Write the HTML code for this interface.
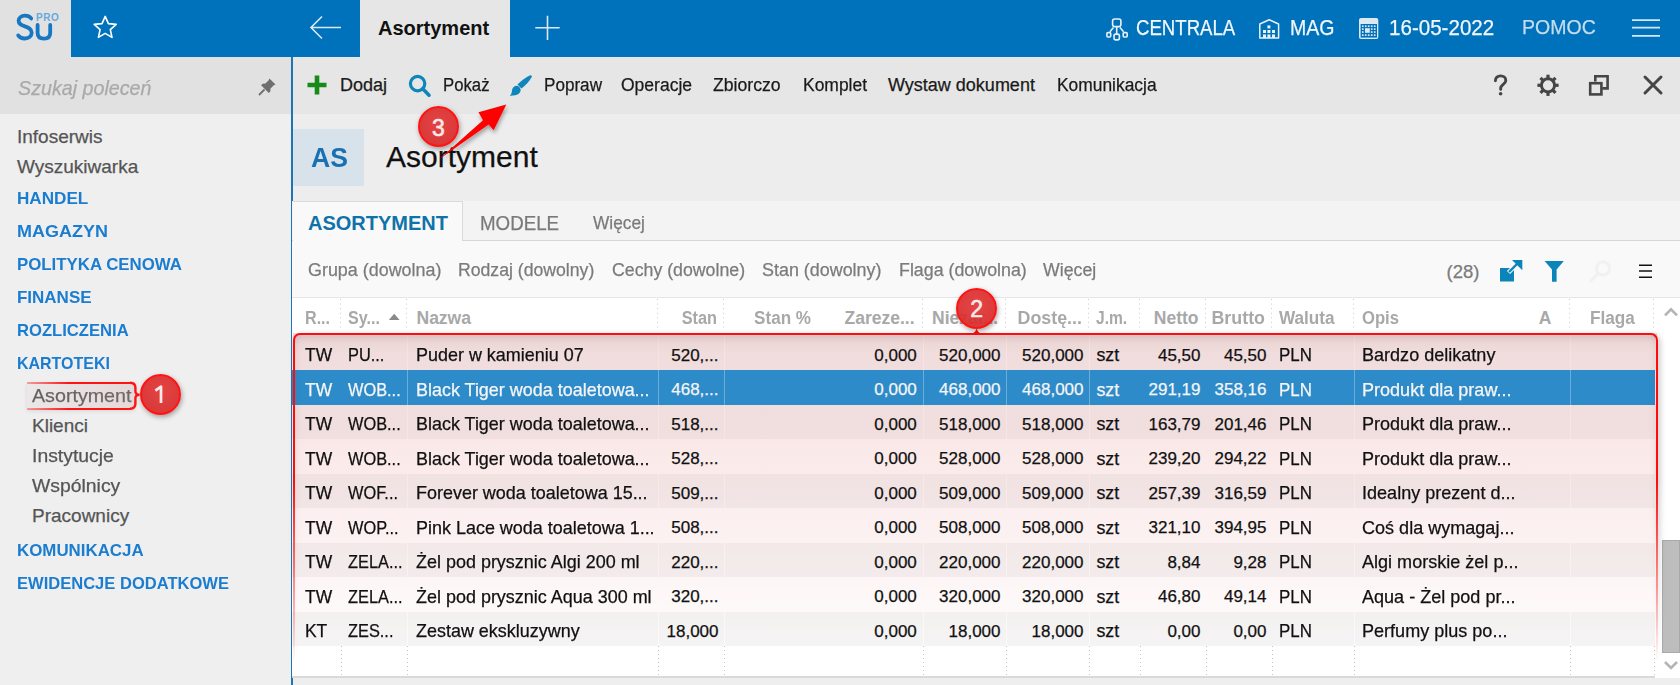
<!DOCTYPE html><html><head><meta charset="utf-8"><style>
html,body{margin:0;padding:0;width:1680px;height:685px;overflow:hidden;background:#eee}
.t{position:absolute;white-space:nowrap;line-height:normal;font-family:"Liberation Sans",sans-serif;-webkit-text-stroke:0.25px currentColor}
svg{overflow:visible}
</style></head><body>
<div style="position:absolute;left:0px;top:0px;width:1680px;height:685px;background:#eeeeee"></div>
<div style="position:absolute;left:0px;top:0px;width:71px;height:57px;background:#e1e1e1"></div>
<div style="position:absolute;left:71px;top:0px;width:1609px;height:57px;background:#0071bb"></div>
<div style="position:absolute;left:360px;top:0px;width:150px;height:57px;background:#e6e6e6"></div>
<div style="position:absolute;left:0px;top:57px;width:291px;height:57px;background:#e1e1e1"></div>
<div style="position:absolute;left:0px;top:114px;width:291px;height:571px;background:#efefef"></div>
<div style="position:absolute;left:291px;top:57px;width:2px;height:628px;background:#1f74b4"></div>
<div style="position:absolute;left:293px;top:57px;width:1387px;height:57px;background:#e6e6e6"></div>
<div style="position:absolute;left:293px;top:114px;width:1387px;height:87px;background:#ededed"></div>
<svg style="position:absolute;left:14px;top:10px;" width="50" height="34" viewBox="0 0 50 34"><text x="22" y="10.6" font-family="Liberation Sans" font-size="10" font-weight="700" fill="#66aadb" letter-spacing="0.6">PRO</text><path d="M17.2 8.4 C15.8 6.6 13.6 5.7 11 5.7 C7.2 5.7 4.6 7.8 4.6 10.8 C4.6 18 17.7 14.8 17.7 22.6 C17.7 26.2 14.8 28.5 10.8 28.5 C7.8 28.5 5.6 27.4 4.2 25.4" fill="none" stroke="#1677c3" stroke-width="3.8" stroke-linecap="round"/><path d="M23.6 15 V23 C23.6 26.6 26 28.6 30 28.6 C34 28.6 36.2 26.6 36.2 23 V15" fill="none" stroke="#1677c3" stroke-width="3.8" stroke-linecap="round"/></svg>
<svg style="position:absolute;left:90px;top:13px;" width="30" height="30" viewBox="0 0 30 30"><path d="M15.2 3.4 L18.4 10.6 L26.2 11.4 L20.3 16.6 L22 24.4 L15.2 20.4 L8.4 24.4 L10.1 16.6 L4.2 11.4 L12 10.6 Z" fill="none" stroke="#fff" stroke-width="1.6" stroke-linejoin="round"/></svg>
<svg style="position:absolute;left:306px;top:12px;" width="40" height="32" viewBox="0 0 40 32"><path d="M5 15.5 H35 M16 4.5 L5 15.5 L16 26.5" fill="none" stroke="#dce9f4" stroke-width="1.6"/></svg>
<svg style="position:absolute;left:530px;top:12px;" width="34" height="32" viewBox="0 0 34 32"><path d="M17.5 3.8 V28 M5.3 15.7 H29.7" fill="none" stroke="#dce9f4" stroke-width="1.6"/></svg>
<div class="t" style="left:378px;top:17.20px;font-size:20px;color:#111;font-weight:700;font-style:normal;-webkit-text-stroke:0;transform:scaleX(1.0);transform-origin:0 0;">Asortyment</div>
<svg style="position:absolute;left:1104px;top:16px;" width="28" height="28" viewBox="0 0 28 28"><g fill="none" stroke="#e8f1f8" stroke-width="1.6"><rect x="8.6" y="3" width="8.3" height="7.6" rx="2"/><rect x="2.9" y="16.6" width="3.8" height="4.4" rx="1"/><rect x="19.2" y="16.6" width="4" height="4.4" rx="1"/><rect x="10" y="18.1" width="5.4" height="5.8" rx="1.8"/><path d="M12.7 10.6 V18.1 M9.4 11.4 L6 15.8 M16 11.4 L19.6 15.8"/></g></svg>
<div class="t" style="left:1136px;top:15.39px;font-size:22px;color:#f2f7fb;font-weight:400;font-style:normal;transform:scaleX(0.846);transform-origin:0 0;">CENTRALA</div>
<svg style="position:absolute;left:1254px;top:14px;" width="30" height="30" viewBox="0 0 30 30"><path d="M5.8 24 V10 L15.2 5.8 L24.6 10 V24 Z" fill="none" stroke="#e8f1f8" stroke-width="1.5" stroke-linejoin="round"/><g fill="#e8f1f8"><rect x="13.4" y="11.4" width="3" height="3"/><rect x="9" y="16" width="3" height="3"/><rect x="13.4" y="16" width="3" height="3"/><rect x="18" y="16" width="3" height="3"/><rect x="9" y="20.4" width="3" height="3.6"/><rect x="13.4" y="20.4" width="3" height="3.6"/><rect x="18" y="20.4" width="3" height="3.6"/></g></svg>
<div class="t" style="left:1290px;top:15.39px;font-size:22px;color:#f2f7fb;font-weight:400;font-style:normal;transform:scaleX(0.89);transform-origin:0 0;">MAG</div>
<svg style="position:absolute;left:1354px;top:14px;" width="30" height="30" viewBox="0 0 30 30"><rect x="5" y="3.9" width="19.3" height="21.1" rx="2" fill="#dce9f3"/><rect x="6.6" y="10" width="16.4" height="13.6" fill="#0071bb"/><g fill="#dce9f3"><rect x="7.91" y="11.35" width="1.7" height="1.7"/><rect x="10.89" y="11.35" width="1.7" height="1.7"/><rect x="13.85" y="11.35" width="1.7" height="1.7"/><rect x="16.85" y="11.35" width="1.7" height="1.7"/><rect x="19.85" y="11.35" width="1.7" height="1.7"/><rect x="7.91" y="14.25" width="1.7" height="1.7"/><rect x="16.85" y="14.25" width="1.7" height="1.7"/><rect x="19.85" y="14.25" width="1.7" height="1.7"/><rect x="7.91" y="17.20" width="1.7" height="1.7"/><rect x="16.85" y="17.20" width="1.7" height="1.7"/><rect x="19.85" y="17.20" width="1.7" height="1.7"/><rect x="7.91" y="20.25" width="1.7" height="1.7"/><rect x="10.89" y="20.25" width="1.7" height="1.7"/><rect x="13.85" y="20.25" width="1.7" height="1.7"/><rect x="16.85" y="20.25" width="1.7" height="1.7"/><rect x="19.85" y="20.25" width="1.7" height="1.7"/><rect x="11" y="14.2" width="4.8" height="4.6"/></g></svg>
<div class="t" style="left:1389px;top:15.09px;font-size:22px;color:#f2f7fb;font-weight:400;font-style:normal;transform:scaleX(0.935);transform-origin:0 0;">16-05-2022</div>
<div class="t" style="left:1522px;top:14.79px;font-size:21px;color:#c5dcee;font-weight:400;font-style:normal;transform:scaleX(0.93);transform-origin:0 0;">POMOC</div>
<svg style="position:absolute;left:1630px;top:17px;" width="32" height="22" viewBox="0 0 32 22"><path d="M2 3.2 H30 M2 10.6 H30 M2 18.9 H30" stroke="#d6e6f3" stroke-width="1.7"/></svg>
<div class="t" style="left:18px;top:76.50px;font-size:20px;color:#a9a9a9;font-weight:400;font-style:italic;transform:scaleX(0.984);transform-origin:0 0;">Szukaj poleceń</div>
<svg style="position:absolute;left:256px;top:76px;" width="22" height="22" viewBox="0 0 22 22"><path d="M13.5 2.5 L19.5 8.5 L17.8 9.3 L14.5 12.6 L14.3 15.4 L12.8 16.9 L5.1 9.2 L6.6 7.7 L9.4 7.5 L12.7 4.2 Z" fill="#6f6f6f"/><path d="M8.5 13.5 L3 19" stroke="#6f6f6f" stroke-width="1.8"/></svg>
<div class="t" style="left:17px;top:125.50px;font-size:19px;color:#555555;font-weight:400;font-style:normal;">Infoserwis</div>
<div class="t" style="left:17px;top:156.21px;font-size:19px;color:#555555;font-weight:400;font-style:normal;">Wyszukiwarka</div>
<div class="t" style="left:17px;top:189.42px;font-size:17px;color:#1a7dcf;font-weight:700;font-style:normal;-webkit-text-stroke:0;transform:scaleX(1.007);transform-origin:0 0;">HANDEL</div>
<div class="t" style="left:17px;top:222.42px;font-size:17px;color:#1a7dcf;font-weight:700;font-style:normal;-webkit-text-stroke:0;transform:scaleX(1.058);transform-origin:0 0;">MAGAZYN</div>
<div class="t" style="left:17px;top:255.42px;font-size:17px;color:#1a7dcf;font-weight:700;font-style:normal;-webkit-text-stroke:0;transform:scaleX(0.99);transform-origin:0 0;">POLITYKA CENOWA</div>
<div class="t" style="left:17px;top:288.42px;font-size:17px;color:#1a7dcf;font-weight:700;font-style:normal;-webkit-text-stroke:0;transform:scaleX(0.999);transform-origin:0 0;">FINANSE</div>
<div class="t" style="left:17px;top:321.42px;font-size:17px;color:#1a7dcf;font-weight:700;font-style:normal;-webkit-text-stroke:0;transform:scaleX(0.977);transform-origin:0 0;">ROZLICZENIA</div>
<div class="t" style="left:17px;top:354.42px;font-size:17px;color:#1a7dcf;font-weight:700;font-style:normal;-webkit-text-stroke:0;transform:scaleX(0.94);transform-origin:0 0;">KARTOTEKI</div>
<div class="t" style="left:32px;top:384.50px;font-size:19px;color:#555555;font-weight:400;font-style:normal;transform:scaleX(1.035);transform-origin:0 0;">Asortyment</div>
<div class="t" style="left:32px;top:414.50px;font-size:19px;color:#555555;font-weight:400;font-style:normal;transform:scaleX(1.0);transform-origin:0 0;">Klienci</div>
<div class="t" style="left:32px;top:444.50px;font-size:19px;color:#555555;font-weight:400;font-style:normal;transform:scaleX(1.02);transform-origin:0 0;">Instytucje</div>
<div class="t" style="left:32px;top:474.50px;font-size:19px;color:#555555;font-weight:400;font-style:normal;transform:scaleX(1.02);transform-origin:0 0;">Wspólnicy</div>
<div class="t" style="left:32px;top:504.51px;font-size:19px;color:#555555;font-weight:400;font-style:normal;transform:scaleX(1.0);transform-origin:0 0;">Pracownicy</div>
<div class="t" style="left:17px;top:540.82px;font-size:17px;color:#1a7dcf;font-weight:700;font-style:normal;-webkit-text-stroke:0;transform:scaleX(0.993);transform-origin:0 0;">KOMUNIKACJA</div>
<div class="t" style="left:17px;top:573.62px;font-size:17px;color:#1a7dcf;font-weight:700;font-style:normal;-webkit-text-stroke:0;transform:scaleX(0.973);transform-origin:0 0;">EWIDENCJE DODATKOWE</div>
<svg style="position:absolute;left:306px;top:74px;" width="22" height="22" viewBox="0 0 22 22"><path d="M11 1.5 V20.5 M1.5 11 H20.5" stroke="#178a17" stroke-width="4.6"/></svg>
<div class="t" style="left:340px;top:74.91px;font-size:18px;color:#1a1a1a;font-weight:400;font-style:normal;">Dodaj</div>
<svg style="position:absolute;left:407px;top:73px;" width="26" height="25" viewBox="0 0 26 25"><circle cx="10.6" cy="10.6" r="7.2" fill="none" stroke="#0e86bb" stroke-width="3.2"/><path d="M15.8 15.8 L22 22.2" stroke="#0e86bb" stroke-width="3.6" stroke-linecap="round"/></svg>
<div class="t" style="left:443px;top:74.91px;font-size:18px;color:#1a1a1a;font-weight:400;font-style:normal;transform:scaleX(0.93);transform-origin:0 0;">Pokaż</div>
<svg style="position:absolute;left:508px;top:73px;" width="26" height="25" viewBox="0 0 26 25"><path d="M22.2 2.3 C23.4 2.0 24.2 3.0 23.6 4.2 C21.4 8.4 17.6 12.4 13.4 15.4 L9.5 11.4 C13.2 8.0 17.8 4.0 22.2 2.3 Z" fill="#0e86bb"/><path d="M7.2 13.0 C9.6 12.2 12.2 14.0 12.6 16.6 C13.0 20.2 9.4 23.0 1.8 22.8 C3.6 21.2 3.8 19.4 4.0 17.6 C4.2 15.4 5.4 13.6 7.2 13.0 Z" fill="#0e86bb"/></svg>
<div class="t" style="left:544px;top:74.91px;font-size:18px;color:#1a1a1a;font-weight:400;font-style:normal;transform:scaleX(0.95);transform-origin:0 0;">Popraw</div>
<div class="t" style="left:621px;top:74.91px;font-size:18px;color:#1a1a1a;font-weight:400;font-style:normal;transform:scaleX(0.973);transform-origin:0 0;">Operacje</div>
<div class="t" style="left:712.5px;top:74.91px;font-size:18px;color:#1a1a1a;font-weight:400;font-style:normal;transform:scaleX(0.98);transform-origin:0 0;">Zbiorczo</div>
<div class="t" style="left:803px;top:74.91px;font-size:18px;color:#1a1a1a;font-weight:400;font-style:normal;transform:scaleX(0.97);transform-origin:0 0;">Komplet</div>
<div class="t" style="left:888px;top:74.91px;font-size:18px;color:#1a1a1a;font-weight:400;font-style:normal;transform:scaleX(1.0);transform-origin:0 0;">Wystaw dokument</div>
<div class="t" style="left:1057px;top:74.91px;font-size:18px;color:#1a1a1a;font-weight:400;font-style:normal;transform:scaleX(0.966);transform-origin:0 0;">Komunikacja</div>
<svg style="position:absolute;left:1490px;top:72px;" width="22" height="26" viewBox="0 0 22 26"><path d="M5.4 8.8 C5.4 5.6 7.6 3.9 10.6 3.9 C13.7 3.9 15.8 5.8 15.8 8.5 C15.8 12 10.7 12.6 10.7 16 V17.4" fill="none" stroke="#454545" stroke-width="2.9" stroke-linecap="round"/><circle cx="10.6" cy="21.8" r="1.8" fill="#454545"/></svg>
<svg style="position:absolute;left:1536px;top:73px;" width="25" height="25" viewBox="0 0 25 25"><g transform="translate(12,12.3)" fill="#454545"><rect x="-1.6" y="-10.6" width="3.2" height="5" transform="rotate(0)"/><rect x="-1.6" y="-10.6" width="3.2" height="5" transform="rotate(45)"/><rect x="-1.6" y="-10.6" width="3.2" height="5" transform="rotate(90)"/><rect x="-1.6" y="-10.6" width="3.2" height="5" transform="rotate(135)"/><rect x="-1.6" y="-10.6" width="3.2" height="5" transform="rotate(180)"/><rect x="-1.6" y="-10.6" width="3.2" height="5" transform="rotate(225)"/><rect x="-1.6" y="-10.6" width="3.2" height="5" transform="rotate(270)"/><rect x="-1.6" y="-10.6" width="3.2" height="5" transform="rotate(315)"/></g><circle cx="12" cy="12.3" r="6.6" fill="none" stroke="#454545" stroke-width="3"/></svg>
<svg style="position:absolute;left:1587px;top:73px;" width="25" height="25" viewBox="0 0 25 25"><g fill="none" stroke="#454545" stroke-width="2.6"><path d="M8.3 8.6 V3.2 H20.6 V15.4 H15.2"/><rect x="3.2" y="10.2" width="11.2" height="11.2"/></g></svg>
<svg style="position:absolute;left:1642px;top:74px;" width="22" height="22" viewBox="0 0 22 22"><path d="M3 3 L19 19 M19 3 L3 19" stroke="#454545" stroke-width="3" stroke-linecap="round"/></svg>
<div style="position:absolute;left:293px;top:129px;width:71px;height:57px;background:#d7e2ea"></div>
<div class="t" style="left:310.5px;top:141.96px;font-size:28px;color:#1971b4;font-weight:700;font-style:normal;-webkit-text-stroke:0;transform:scaleX(0.95);transform-origin:0 0;">AS</div>
<div class="t" style="left:386px;top:139.85px;font-size:30px;color:#111;font-weight:400;font-style:normal;">Asortyment</div>
<div style="position:absolute;left:292px;top:201px;width:1388px;height:40px;background:#f3f3f3;border-bottom:1px solid #d6d6d6;box-sizing:border-box"></div>
<div style="position:absolute;left:293px;top:201px;width:170px;height:40px;background:#f9f9f9;border:1px solid #dadada;border-bottom:none;border-left:none;box-sizing:border-box"></div>
<div class="t" style="left:308px;top:211.90px;font-size:20px;color:#0f73a9;font-weight:700;font-style:normal;-webkit-text-stroke:0;">ASORTYMENT</div>
<div class="t" style="left:479.5px;top:212.35px;font-size:19.5px;color:#7a7a7a;font-weight:400;font-style:normal;transform:scaleX(0.96);transform-origin:0 0;">MODELE</div>
<div class="t" style="left:593px;top:212.46px;font-size:18.5px;color:#7a7a7a;font-weight:400;font-style:normal;transform:scaleX(0.935);transform-origin:0 0;">Więcej</div>
<div style="position:absolute;left:292px;top:241px;width:1388px;height:57px;background:#f9f9f9;border-bottom:1px solid #e6e6e6;box-sizing:border-box"></div>
<div class="t" style="left:307.5px;top:259.51px;font-size:18px;color:#7b7b7b;font-weight:400;font-style:normal;transform:scaleX(0.995);transform-origin:0 0;">Grupa (dowolna)</div>
<div class="t" style="left:458px;top:259.51px;font-size:18px;color:#7b7b7b;font-weight:400;font-style:normal;transform:scaleX(0.98);transform-origin:0 0;">Rodzaj (dowolny)</div>
<div class="t" style="left:612.4px;top:259.51px;font-size:18px;color:#7b7b7b;font-weight:400;font-style:normal;transform:scaleX(0.985);transform-origin:0 0;">Cechy (dowolne)</div>
<div class="t" style="left:762px;top:259.51px;font-size:18px;color:#7b7b7b;font-weight:400;font-style:normal;transform:scaleX(0.995);transform-origin:0 0;">Stan (dowolny)</div>
<div class="t" style="left:899px;top:259.51px;font-size:18px;color:#7b7b7b;font-weight:400;font-style:normal;transform:scaleX(0.99);transform-origin:0 0;">Flaga (dowolna)</div>
<div class="t" style="left:1043px;top:259.51px;font-size:18px;color:#7b7b7b;font-weight:400;font-style:normal;transform:scaleX(0.985);transform-origin:0 0;">Więcej</div>
<div class="t" style="left:1446.5px;top:261.26px;font-size:18.5px;color:#7b7b7b;font-weight:400;font-style:normal;">(28)</div>
<svg style="position:absolute;left:1499px;top:259px;" width="25" height="24" viewBox="0 0 25 24"><rect x="1" y="9" width="14" height="13.5" fill="#0b84b9"/><path d="M9.5 13.5 L19.5 3.5" stroke="#f9f9f9" stroke-width="4.5"/><path d="M10 13 L19 4" stroke="#0b84b9" stroke-width="2.4"/><path d="M13 1 H23.3 V11.3 Z" fill="#0b84b9"/></svg>
<svg style="position:absolute;left:1544px;top:260px;" width="22" height="23" viewBox="0 0 22 23"><path d="M0.6 1 H19.8 L12.6 9.6 V21.8 H8 V9.6 Z" fill="#0b84b9"/></svg>
<svg style="position:absolute;left:1588px;top:258px;" width="26" height="26" viewBox="0 0 26 26"><circle cx="15" cy="10.5" r="6.6" fill="none" stroke="#f1f1f1" stroke-width="3"/><path d="M10.2 15.4 L3 22.6" stroke="#f1f1f1" stroke-width="3" stroke-linecap="round"/></svg>
<svg style="position:absolute;left:1638px;top:263px;" width="16" height="16" viewBox="0 0 16 16"><path d="M1 2.2 H14 M1 8.1 H14 M1 14.2 H14" stroke="#111" stroke-width="1.5"/></svg>
<div style="position:absolute;left:292px;top:297px;width:1363px;height:381px;background:#ffffff"></div>
<div style="position:absolute;left:292px;top:297px;width:1388px;height:1px;background:#e6e6e6"></div>
<div style="position:absolute;left:1655px;top:298px;width:25px;height:380px;background:#ffffff"></div>
<div style="position:absolute;left:292px;top:676px;width:1363px;height:2px;background:#d9d9d9"></div>
<div style="position:absolute;left:340px;top:299px;width:1px;height:32px;background-image:linear-gradient(#c6c6c6 25%,transparent 25%);background-size:1px 4.6px"></div>
<div style="position:absolute;left:341px;top:646px;width:1px;height:30px;background-image:linear-gradient(#c4c4c4 25%,transparent 25%);background-size:1px 4px"></div>
<div style="position:absolute;left:406px;top:299px;width:1px;height:32px;background-image:linear-gradient(#c6c6c6 25%,transparent 25%);background-size:1px 4.6px"></div>
<div style="position:absolute;left:407px;top:646px;width:1px;height:30px;background-image:linear-gradient(#c4c4c4 25%,transparent 25%);background-size:1px 4px"></div>
<div style="position:absolute;left:657px;top:299px;width:1px;height:32px;background-image:linear-gradient(#c6c6c6 25%,transparent 25%);background-size:1px 4.6px"></div>
<div style="position:absolute;left:658px;top:646px;width:1px;height:30px;background-image:linear-gradient(#c4c4c4 25%,transparent 25%);background-size:1px 4px"></div>
<div style="position:absolute;left:723px;top:299px;width:1px;height:32px;background-image:linear-gradient(#c6c6c6 25%,transparent 25%);background-size:1px 4.6px"></div>
<div style="position:absolute;left:724px;top:646px;width:1px;height:30px;background-image:linear-gradient(#c4c4c4 25%,transparent 25%);background-size:1px 4px"></div>
<div style="position:absolute;left:922px;top:299px;width:1px;height:32px;background-image:linear-gradient(#c6c6c6 25%,transparent 25%);background-size:1px 4.6px"></div>
<div style="position:absolute;left:923px;top:646px;width:1px;height:30px;background-image:linear-gradient(#c4c4c4 25%,transparent 25%);background-size:1px 4px"></div>
<div style="position:absolute;left:1005px;top:299px;width:1px;height:32px;background-image:linear-gradient(#c6c6c6 25%,transparent 25%);background-size:1px 4.6px"></div>
<div style="position:absolute;left:1006px;top:646px;width:1px;height:30px;background-image:linear-gradient(#c4c4c4 25%,transparent 25%);background-size:1px 4px"></div>
<div style="position:absolute;left:1088px;top:299px;width:1px;height:32px;background-image:linear-gradient(#c6c6c6 25%,transparent 25%);background-size:1px 4.6px"></div>
<div style="position:absolute;left:1089px;top:646px;width:1px;height:30px;background-image:linear-gradient(#c4c4c4 25%,transparent 25%);background-size:1px 4px"></div>
<div style="position:absolute;left:1139px;top:299px;width:1px;height:32px;background-image:linear-gradient(#c6c6c6 25%,transparent 25%);background-size:1px 4.6px"></div>
<div style="position:absolute;left:1140px;top:646px;width:1px;height:30px;background-image:linear-gradient(#c4c4c4 25%,transparent 25%);background-size:1px 4px"></div>
<div style="position:absolute;left:1205px;top:299px;width:1px;height:32px;background-image:linear-gradient(#c6c6c6 25%,transparent 25%);background-size:1px 4.6px"></div>
<div style="position:absolute;left:1206px;top:646px;width:1px;height:30px;background-image:linear-gradient(#c4c4c4 25%,transparent 25%);background-size:1px 4px"></div>
<div style="position:absolute;left:1271px;top:299px;width:1px;height:32px;background-image:linear-gradient(#c6c6c6 25%,transparent 25%);background-size:1px 4.6px"></div>
<div style="position:absolute;left:1272px;top:646px;width:1px;height:30px;background-image:linear-gradient(#c4c4c4 25%,transparent 25%);background-size:1px 4px"></div>
<div style="position:absolute;left:1353px;top:299px;width:1px;height:32px;background-image:linear-gradient(#c6c6c6 25%,transparent 25%);background-size:1px 4.6px"></div>
<div style="position:absolute;left:1354px;top:646px;width:1px;height:30px;background-image:linear-gradient(#c4c4c4 25%,transparent 25%);background-size:1px 4px"></div>
<div style="position:absolute;left:1569px;top:299px;width:1px;height:32px;background-image:linear-gradient(#c6c6c6 25%,transparent 25%);background-size:1px 4.6px"></div>
<div style="position:absolute;left:1570px;top:646px;width:1px;height:30px;background-image:linear-gradient(#c4c4c4 25%,transparent 25%);background-size:1px 4px"></div>
<div style="position:absolute;left:1653px;top:299px;width:1px;height:32px;background-image:linear-gradient(#c6c6c6 25%,transparent 25%);background-size:1px 4.6px"></div>
<div style="position:absolute;left:1654px;top:646px;width:1px;height:30px;background-image:linear-gradient(#c4c4c4 25%,transparent 25%);background-size:1px 4px"></div>
<div class="t" style="left:305.4px;top:307.76px;font-size:17.5px;color:#a8a8a8;font-weight:700;font-style:normal;-webkit-text-stroke:0;transform:scaleX(0.92);transform-origin:0 0;">R...</div>
<div class="t" style="left:348.4px;top:307.76px;font-size:17.5px;color:#a8a8a8;font-weight:700;font-style:normal;-webkit-text-stroke:0;transform:scaleX(0.92);transform-origin:0 0;">Sy...</div>
<svg style="position:absolute;left:388px;top:313px;" width="13" height="8" viewBox="0 0 13 8"><path d="M0.8 7 L6.2 0.8 L11.6 7 Z" fill="#8a8a8a"/></svg>
<div class="t" style="left:416.5px;top:307.76px;font-size:17.5px;color:#a8a8a8;font-weight:700;font-style:normal;-webkit-text-stroke:0;transform:scaleX(1.0);transform-origin:0 0;">Nazwa</div>
<div class="t" style="left:316.5px;width:400px;text-align:right;top:307.76px;font-size:17.5px;color:#a8a8a8;font-weight:700;-webkit-text-stroke:0;transform:scaleX(0.93);transform-origin:100% 0;">Stan</div>
<div class="t" style="left:410.5px;width:400px;text-align:right;top:307.76px;font-size:17.5px;color:#a8a8a8;font-weight:700;-webkit-text-stroke:0;transform:scaleX(0.975);transform-origin:100% 0;">Stan %</div>
<div class="t" style="left:514.5px;width:400px;text-align:right;top:307.76px;font-size:17.5px;color:#a8a8a8;font-weight:700;-webkit-text-stroke:0;transform:scaleX(1.0);transform-origin:100% 0;">Zareze...</div>
<div class="t" style="left:932px;top:307.76px;font-size:17.5px;color:#a8a8a8;font-weight:700;font-style:normal;-webkit-text-stroke:0;transform:scaleX(1.0);transform-origin:0 0;">Niezar...</div>
<div class="t" style="left:681.5px;width:400px;text-align:right;top:307.76px;font-size:17.5px;color:#a8a8a8;font-weight:700;-webkit-text-stroke:0;transform:scaleX(1.02);transform-origin:100% 0;">Dostę...</div>
<div class="t" style="left:1096.4px;top:307.76px;font-size:17.5px;color:#a8a8a8;font-weight:700;font-style:normal;-webkit-text-stroke:0;transform:scaleX(0.89);transform-origin:0 0;">J.m.</div>
<div class="t" style="left:798.5px;width:400px;text-align:right;top:307.76px;font-size:17.5px;color:#a8a8a8;font-weight:700;-webkit-text-stroke:0;transform:scaleX(1.0);transform-origin:100% 0;">Netto</div>
<div class="t" style="left:865px;width:400px;text-align:right;top:307.76px;font-size:17.5px;color:#a8a8a8;font-weight:700;-webkit-text-stroke:0;transform:scaleX(1.02);transform-origin:100% 0;">Brutto</div>
<div class="t" style="left:1278.6px;top:307.76px;font-size:17.5px;color:#a8a8a8;font-weight:700;font-style:normal;-webkit-text-stroke:0;transform:scaleX(0.98);transform-origin:0 0;">Waluta</div>
<div class="t" style="left:1362px;top:307.76px;font-size:17.5px;color:#a8a8a8;font-weight:700;font-style:normal;-webkit-text-stroke:0;transform:scaleX(0.95);transform-origin:0 0;">Opis</div>
<div class="t" style="left:1151.5px;width:400px;text-align:right;top:307.76px;font-size:17.5px;color:#a8a8a8;font-weight:700;-webkit-text-stroke:0;">A</div>
<div class="t" style="left:1590.3px;top:307.76px;font-size:17.5px;color:#a8a8a8;font-weight:700;font-style:normal;-webkit-text-stroke:0;transform:scaleX(0.98);transform-origin:0 0;">Flaga</div>
<svg style="position:absolute;left:1663px;top:306px;" width="16" height="12" viewBox="0 0 16 12"><path d="M2 9.4 L8 3.4 L14 9.4" fill="none" stroke="#b4b4b4" stroke-width="2.6"/></svg>
<div style="position:absolute;left:1662px;top:540px;width:18px;height:113px;background:#bdbdbd;border:1px solid #a9a9a9;box-sizing:border-box"></div>
<svg style="position:absolute;left:1663px;top:659px;" width="16" height="12" viewBox="0 0 16 12"><path d="M2 3 L8 9 L14 3" fill="none" stroke="#b4b4b4" stroke-width="2.6"/></svg>
<div style="position:absolute;left:292px;top:336px;width:1363px;height:34px;background:#f5f5f5"></div>
<div style="position:absolute;left:407px;top:336px;width:1px;height:34px;background:rgba(255,255,255,0.7)"></div>
<div style="position:absolute;left:658px;top:336px;width:1px;height:34px;background:rgba(255,255,255,0.7)"></div>
<div style="position:absolute;left:724px;top:336px;width:1px;height:34px;background:rgba(255,255,255,0.7)"></div>
<div style="position:absolute;left:923px;top:336px;width:1px;height:34px;background:rgba(255,255,255,0.7)"></div>
<div style="position:absolute;left:1006px;top:336px;width:1px;height:34px;background:rgba(255,255,255,0.7)"></div>
<div style="position:absolute;left:1089px;top:336px;width:1px;height:34px;background:rgba(255,255,255,0.7)"></div>
<div style="position:absolute;left:1354px;top:336px;width:1px;height:34px;background:rgba(255,255,255,0.7)"></div>
<div style="position:absolute;left:1570px;top:336px;width:1px;height:34px;background:rgba(255,255,255,0.7)"></div>
<div style="position:absolute;left:292px;top:405px;width:1363px;height:34px;background:#f5f5f5"></div>
<div style="position:absolute;left:407px;top:405px;width:1px;height:34px;background:rgba(255,255,255,0.7)"></div>
<div style="position:absolute;left:658px;top:405px;width:1px;height:34px;background:rgba(255,255,255,0.7)"></div>
<div style="position:absolute;left:724px;top:405px;width:1px;height:34px;background:rgba(255,255,255,0.7)"></div>
<div style="position:absolute;left:923px;top:405px;width:1px;height:34px;background:rgba(255,255,255,0.7)"></div>
<div style="position:absolute;left:1006px;top:405px;width:1px;height:34px;background:rgba(255,255,255,0.7)"></div>
<div style="position:absolute;left:1089px;top:405px;width:1px;height:34px;background:rgba(255,255,255,0.7)"></div>
<div style="position:absolute;left:1354px;top:405px;width:1px;height:34px;background:rgba(255,255,255,0.7)"></div>
<div style="position:absolute;left:1570px;top:405px;width:1px;height:34px;background:rgba(255,255,255,0.7)"></div>
<div style="position:absolute;left:292px;top:439px;width:1363px;height:35px;background:#ffffff"></div>
<div style="position:absolute;left:407px;top:439px;width:1px;height:35px;background:rgba(255,255,255,0.7)"></div>
<div style="position:absolute;left:658px;top:439px;width:1px;height:35px;background:rgba(255,255,255,0.7)"></div>
<div style="position:absolute;left:724px;top:439px;width:1px;height:35px;background:rgba(255,255,255,0.7)"></div>
<div style="position:absolute;left:923px;top:439px;width:1px;height:35px;background:rgba(255,255,255,0.7)"></div>
<div style="position:absolute;left:1006px;top:439px;width:1px;height:35px;background:rgba(255,255,255,0.7)"></div>
<div style="position:absolute;left:1089px;top:439px;width:1px;height:35px;background:rgba(255,255,255,0.7)"></div>
<div style="position:absolute;left:1354px;top:439px;width:1px;height:35px;background:rgba(255,255,255,0.7)"></div>
<div style="position:absolute;left:1570px;top:439px;width:1px;height:35px;background:rgba(255,255,255,0.7)"></div>
<div style="position:absolute;left:292px;top:474px;width:1363px;height:34px;background:#f5f5f5"></div>
<div style="position:absolute;left:407px;top:474px;width:1px;height:34px;background:rgba(255,255,255,0.7)"></div>
<div style="position:absolute;left:658px;top:474px;width:1px;height:34px;background:rgba(255,255,255,0.7)"></div>
<div style="position:absolute;left:724px;top:474px;width:1px;height:34px;background:rgba(255,255,255,0.7)"></div>
<div style="position:absolute;left:923px;top:474px;width:1px;height:34px;background:rgba(255,255,255,0.7)"></div>
<div style="position:absolute;left:1006px;top:474px;width:1px;height:34px;background:rgba(255,255,255,0.7)"></div>
<div style="position:absolute;left:1089px;top:474px;width:1px;height:34px;background:rgba(255,255,255,0.7)"></div>
<div style="position:absolute;left:1354px;top:474px;width:1px;height:34px;background:rgba(255,255,255,0.7)"></div>
<div style="position:absolute;left:1570px;top:474px;width:1px;height:34px;background:rgba(255,255,255,0.7)"></div>
<div style="position:absolute;left:292px;top:508px;width:1363px;height:35px;background:#ffffff"></div>
<div style="position:absolute;left:407px;top:508px;width:1px;height:35px;background:rgba(255,255,255,0.7)"></div>
<div style="position:absolute;left:658px;top:508px;width:1px;height:35px;background:rgba(255,255,255,0.7)"></div>
<div style="position:absolute;left:724px;top:508px;width:1px;height:35px;background:rgba(255,255,255,0.7)"></div>
<div style="position:absolute;left:923px;top:508px;width:1px;height:35px;background:rgba(255,255,255,0.7)"></div>
<div style="position:absolute;left:1006px;top:508px;width:1px;height:35px;background:rgba(255,255,255,0.7)"></div>
<div style="position:absolute;left:1089px;top:508px;width:1px;height:35px;background:rgba(255,255,255,0.7)"></div>
<div style="position:absolute;left:1354px;top:508px;width:1px;height:35px;background:rgba(255,255,255,0.7)"></div>
<div style="position:absolute;left:1570px;top:508px;width:1px;height:35px;background:rgba(255,255,255,0.7)"></div>
<div style="position:absolute;left:292px;top:543px;width:1363px;height:34px;background:#f5f5f5"></div>
<div style="position:absolute;left:407px;top:543px;width:1px;height:34px;background:rgba(255,255,255,0.7)"></div>
<div style="position:absolute;left:658px;top:543px;width:1px;height:34px;background:rgba(255,255,255,0.7)"></div>
<div style="position:absolute;left:724px;top:543px;width:1px;height:34px;background:rgba(255,255,255,0.7)"></div>
<div style="position:absolute;left:923px;top:543px;width:1px;height:34px;background:rgba(255,255,255,0.7)"></div>
<div style="position:absolute;left:1006px;top:543px;width:1px;height:34px;background:rgba(255,255,255,0.7)"></div>
<div style="position:absolute;left:1089px;top:543px;width:1px;height:34px;background:rgba(255,255,255,0.7)"></div>
<div style="position:absolute;left:1354px;top:543px;width:1px;height:34px;background:rgba(255,255,255,0.7)"></div>
<div style="position:absolute;left:1570px;top:543px;width:1px;height:34px;background:rgba(255,255,255,0.7)"></div>
<div style="position:absolute;left:292px;top:577px;width:1363px;height:35px;background:#ffffff"></div>
<div style="position:absolute;left:407px;top:577px;width:1px;height:35px;background:rgba(255,255,255,0.7)"></div>
<div style="position:absolute;left:658px;top:577px;width:1px;height:35px;background:rgba(255,255,255,0.7)"></div>
<div style="position:absolute;left:724px;top:577px;width:1px;height:35px;background:rgba(255,255,255,0.7)"></div>
<div style="position:absolute;left:923px;top:577px;width:1px;height:35px;background:rgba(255,255,255,0.7)"></div>
<div style="position:absolute;left:1006px;top:577px;width:1px;height:35px;background:rgba(255,255,255,0.7)"></div>
<div style="position:absolute;left:1089px;top:577px;width:1px;height:35px;background:rgba(255,255,255,0.7)"></div>
<div style="position:absolute;left:1354px;top:577px;width:1px;height:35px;background:rgba(255,255,255,0.7)"></div>
<div style="position:absolute;left:1570px;top:577px;width:1px;height:35px;background:rgba(255,255,255,0.7)"></div>
<div style="position:absolute;left:292px;top:612px;width:1363px;height:34px;background:#f5f5f5"></div>
<div style="position:absolute;left:407px;top:612px;width:1px;height:34px;background:rgba(255,255,255,0.7)"></div>
<div style="position:absolute;left:658px;top:612px;width:1px;height:34px;background:rgba(255,255,255,0.7)"></div>
<div style="position:absolute;left:724px;top:612px;width:1px;height:34px;background:rgba(255,255,255,0.7)"></div>
<div style="position:absolute;left:923px;top:612px;width:1px;height:34px;background:rgba(255,255,255,0.7)"></div>
<div style="position:absolute;left:1006px;top:612px;width:1px;height:34px;background:rgba(255,255,255,0.7)"></div>
<div style="position:absolute;left:1089px;top:612px;width:1px;height:34px;background:rgba(255,255,255,0.7)"></div>
<div style="position:absolute;left:1354px;top:612px;width:1px;height:34px;background:rgba(255,255,255,0.7)"></div>
<div style="position:absolute;left:1570px;top:612px;width:1px;height:34px;background:rgba(255,255,255,0.7)"></div>
<div style="position:absolute;left:293px;top:333px;width:1364px;height:320px;background:linear-gradient(rgba(200,0,0,0.10),rgba(200,0,0,0.095) 30%,rgba(200,0,0,0.06) 60%,rgba(200,0,0,0.033) 82%,rgba(200,0,0,0.0) 100%)"></div>
<div style="position:absolute;left:293px;top:333px;width:1364px;height:20px;background:linear-gradient(rgba(120,40,40,0.06),rgba(120,40,40,0))"></div>
<div style="position:absolute;left:292px;top:370px;width:1363px;height:35px;background:#2e8bc9"></div>
<div style="position:absolute;left:407px;top:370px;width:1px;height:35px;background:rgba(255,255,255,0.3)"></div>
<div style="position:absolute;left:658px;top:370px;width:1px;height:35px;background:rgba(255,255,255,0.3)"></div>
<div style="position:absolute;left:724px;top:370px;width:1px;height:35px;background:rgba(255,255,255,0.3)"></div>
<div style="position:absolute;left:923px;top:370px;width:1px;height:35px;background:rgba(255,255,255,0.3)"></div>
<div style="position:absolute;left:1006px;top:370px;width:1px;height:35px;background:rgba(255,255,255,0.3)"></div>
<div style="position:absolute;left:1089px;top:370px;width:1px;height:35px;background:rgba(255,255,255,0.3)"></div>
<div style="position:absolute;left:1354px;top:370px;width:1px;height:35px;background:rgba(255,255,255,0.3)"></div>
<div style="position:absolute;left:1570px;top:370px;width:1px;height:35px;background:rgba(255,255,255,0.3)"></div>
<div class="t" style="left:305.4px;top:345.19px;font-size:17.8px;color:#111;font-weight:400;font-style:normal;transform:scaleX(0.98);transform-origin:0 0;">TW</div>
<div class="t" style="left:348.4px;top:345.19px;font-size:17.8px;color:#111;font-weight:400;font-style:normal;transform:scaleX(0.92);transform-origin:0 0;">PU...</div>
<div class="t" style="left:416.2px;top:345.19px;font-size:17.8px;color:#111;font-weight:400;font-style:normal;transform:scaleX(1.01);transform-origin:0 0;">Puder w kamieniu 07</div>
<div class="t" style="left:318.5px;width:400px;text-align:right;top:345.92px;font-size:17px;color:#111;font-weight:400;">520,...</div>
<div class="t" style="left:516.8px;width:400px;text-align:right;top:345.92px;font-size:17px;color:#111;font-weight:400;">0,000</div>
<div class="t" style="left:600.5px;width:400px;text-align:right;top:345.92px;font-size:17px;color:#111;font-weight:400;">520,000</div>
<div class="t" style="left:683.5px;width:400px;text-align:right;top:345.92px;font-size:17px;color:#111;font-weight:400;">520,000</div>
<div class="t" style="left:1096.4px;top:345.19px;font-size:17.8px;color:#111;font-weight:400;font-style:normal;">szt</div>
<div class="t" style="left:800.5px;width:400px;text-align:right;top:345.92px;font-size:17px;color:#111;font-weight:400;">45,50</div>
<div class="t" style="left:866.5px;width:400px;text-align:right;top:345.92px;font-size:17px;color:#111;font-weight:400;">45,50</div>
<div class="t" style="left:1278.6px;top:345.19px;font-size:17.8px;color:#111;font-weight:400;font-style:normal;transform:scaleX(0.95);transform-origin:0 0;">PLN</div>
<div class="t" style="left:1362px;top:345.19px;font-size:17.8px;color:#111;font-weight:400;font-style:normal;transform:scaleX(1.015);transform-origin:0 0;">Bardzo delikatny</div>
<div class="t" style="left:305.4px;top:379.69px;font-size:17.8px;color:#f5f5f5;font-weight:400;font-style:normal;transform:scaleX(0.98);transform-origin:0 0;">TW</div>
<div class="t" style="left:348.4px;top:379.69px;font-size:17.8px;color:#f5f5f5;font-weight:400;font-style:normal;transform:scaleX(0.92);transform-origin:0 0;">WOB...</div>
<div class="t" style="left:416.2px;top:379.69px;font-size:17.8px;color:#f5f5f5;font-weight:400;font-style:normal;transform:scaleX(1.01);transform-origin:0 0;">Black Tiger woda toaletowa...</div>
<div class="t" style="left:318.5px;width:400px;text-align:right;top:380.42px;font-size:17px;color:#f5f5f5;font-weight:400;">468,...</div>
<div class="t" style="left:516.8px;width:400px;text-align:right;top:380.42px;font-size:17px;color:#f5f5f5;font-weight:400;">0,000</div>
<div class="t" style="left:600.5px;width:400px;text-align:right;top:380.42px;font-size:17px;color:#f5f5f5;font-weight:400;">468,000</div>
<div class="t" style="left:683.5px;width:400px;text-align:right;top:380.42px;font-size:17px;color:#f5f5f5;font-weight:400;">468,000</div>
<div class="t" style="left:1096.4px;top:379.69px;font-size:17.8px;color:#f5f5f5;font-weight:400;font-style:normal;">szt</div>
<div class="t" style="left:800.5px;width:400px;text-align:right;top:380.42px;font-size:17px;color:#f5f5f5;font-weight:400;">291,19</div>
<div class="t" style="left:866.5px;width:400px;text-align:right;top:380.42px;font-size:17px;color:#f5f5f5;font-weight:400;">358,16</div>
<div class="t" style="left:1278.6px;top:379.69px;font-size:17.8px;color:#f5f5f5;font-weight:400;font-style:normal;transform:scaleX(0.95);transform-origin:0 0;">PLN</div>
<div class="t" style="left:1362px;top:379.69px;font-size:17.8px;color:#f5f5f5;font-weight:400;font-style:normal;transform:scaleX(1.015);transform-origin:0 0;">Produkt dla praw...</div>
<div class="t" style="left:305.4px;top:414.19px;font-size:17.8px;color:#111;font-weight:400;font-style:normal;transform:scaleX(0.98);transform-origin:0 0;">TW</div>
<div class="t" style="left:348.4px;top:414.19px;font-size:17.8px;color:#111;font-weight:400;font-style:normal;transform:scaleX(0.92);transform-origin:0 0;">WOB...</div>
<div class="t" style="left:416.2px;top:414.19px;font-size:17.8px;color:#111;font-weight:400;font-style:normal;transform:scaleX(1.01);transform-origin:0 0;">Black Tiger woda toaletowa...</div>
<div class="t" style="left:318.5px;width:400px;text-align:right;top:414.92px;font-size:17px;color:#111;font-weight:400;">518,...</div>
<div class="t" style="left:516.8px;width:400px;text-align:right;top:414.92px;font-size:17px;color:#111;font-weight:400;">0,000</div>
<div class="t" style="left:600.5px;width:400px;text-align:right;top:414.92px;font-size:17px;color:#111;font-weight:400;">518,000</div>
<div class="t" style="left:683.5px;width:400px;text-align:right;top:414.92px;font-size:17px;color:#111;font-weight:400;">518,000</div>
<div class="t" style="left:1096.4px;top:414.19px;font-size:17.8px;color:#111;font-weight:400;font-style:normal;">szt</div>
<div class="t" style="left:800.5px;width:400px;text-align:right;top:414.92px;font-size:17px;color:#111;font-weight:400;">163,79</div>
<div class="t" style="left:866.5px;width:400px;text-align:right;top:414.92px;font-size:17px;color:#111;font-weight:400;">201,46</div>
<div class="t" style="left:1278.6px;top:414.19px;font-size:17.8px;color:#111;font-weight:400;font-style:normal;transform:scaleX(0.95);transform-origin:0 0;">PLN</div>
<div class="t" style="left:1362px;top:414.19px;font-size:17.8px;color:#111;font-weight:400;font-style:normal;transform:scaleX(1.015);transform-origin:0 0;">Produkt dla praw...</div>
<div class="t" style="left:305.4px;top:448.69px;font-size:17.8px;color:#111;font-weight:400;font-style:normal;transform:scaleX(0.98);transform-origin:0 0;">TW</div>
<div class="t" style="left:348.4px;top:448.69px;font-size:17.8px;color:#111;font-weight:400;font-style:normal;transform:scaleX(0.92);transform-origin:0 0;">WOB...</div>
<div class="t" style="left:416.2px;top:448.69px;font-size:17.8px;color:#111;font-weight:400;font-style:normal;transform:scaleX(1.01);transform-origin:0 0;">Black Tiger woda toaletowa...</div>
<div class="t" style="left:318.5px;width:400px;text-align:right;top:449.42px;font-size:17px;color:#111;font-weight:400;">528,...</div>
<div class="t" style="left:516.8px;width:400px;text-align:right;top:449.42px;font-size:17px;color:#111;font-weight:400;">0,000</div>
<div class="t" style="left:600.5px;width:400px;text-align:right;top:449.42px;font-size:17px;color:#111;font-weight:400;">528,000</div>
<div class="t" style="left:683.5px;width:400px;text-align:right;top:449.42px;font-size:17px;color:#111;font-weight:400;">528,000</div>
<div class="t" style="left:1096.4px;top:448.69px;font-size:17.8px;color:#111;font-weight:400;font-style:normal;">szt</div>
<div class="t" style="left:800.5px;width:400px;text-align:right;top:449.42px;font-size:17px;color:#111;font-weight:400;">239,20</div>
<div class="t" style="left:866.5px;width:400px;text-align:right;top:449.42px;font-size:17px;color:#111;font-weight:400;">294,22</div>
<div class="t" style="left:1278.6px;top:448.69px;font-size:17.8px;color:#111;font-weight:400;font-style:normal;transform:scaleX(0.95);transform-origin:0 0;">PLN</div>
<div class="t" style="left:1362px;top:448.69px;font-size:17.8px;color:#111;font-weight:400;font-style:normal;transform:scaleX(1.015);transform-origin:0 0;">Produkt dla praw...</div>
<div class="t" style="left:305.4px;top:483.19px;font-size:17.8px;color:#111;font-weight:400;font-style:normal;transform:scaleX(0.98);transform-origin:0 0;">TW</div>
<div class="t" style="left:348.4px;top:483.19px;font-size:17.8px;color:#111;font-weight:400;font-style:normal;transform:scaleX(0.92);transform-origin:0 0;">WOF...</div>
<div class="t" style="left:416.2px;top:483.19px;font-size:17.8px;color:#111;font-weight:400;font-style:normal;transform:scaleX(1.01);transform-origin:0 0;">Forever woda toaletowa 15...</div>
<div class="t" style="left:318.5px;width:400px;text-align:right;top:483.92px;font-size:17px;color:#111;font-weight:400;">509,...</div>
<div class="t" style="left:516.8px;width:400px;text-align:right;top:483.92px;font-size:17px;color:#111;font-weight:400;">0,000</div>
<div class="t" style="left:600.5px;width:400px;text-align:right;top:483.92px;font-size:17px;color:#111;font-weight:400;">509,000</div>
<div class="t" style="left:683.5px;width:400px;text-align:right;top:483.92px;font-size:17px;color:#111;font-weight:400;">509,000</div>
<div class="t" style="left:1096.4px;top:483.19px;font-size:17.8px;color:#111;font-weight:400;font-style:normal;">szt</div>
<div class="t" style="left:800.5px;width:400px;text-align:right;top:483.92px;font-size:17px;color:#111;font-weight:400;">257,39</div>
<div class="t" style="left:866.5px;width:400px;text-align:right;top:483.92px;font-size:17px;color:#111;font-weight:400;">316,59</div>
<div class="t" style="left:1278.6px;top:483.19px;font-size:17.8px;color:#111;font-weight:400;font-style:normal;transform:scaleX(0.95);transform-origin:0 0;">PLN</div>
<div class="t" style="left:1362px;top:483.19px;font-size:17.8px;color:#111;font-weight:400;font-style:normal;transform:scaleX(1.015);transform-origin:0 0;">Idealny prezent d...</div>
<div class="t" style="left:305.4px;top:517.69px;font-size:17.8px;color:#111;font-weight:400;font-style:normal;transform:scaleX(0.98);transform-origin:0 0;">TW</div>
<div class="t" style="left:348.4px;top:517.69px;font-size:17.8px;color:#111;font-weight:400;font-style:normal;transform:scaleX(0.92);transform-origin:0 0;">WOP...</div>
<div class="t" style="left:416.2px;top:517.69px;font-size:17.8px;color:#111;font-weight:400;font-style:normal;transform:scaleX(1.01);transform-origin:0 0;">Pink Lace woda toaletowa 1...</div>
<div class="t" style="left:318.5px;width:400px;text-align:right;top:518.41px;font-size:17px;color:#111;font-weight:400;">508,...</div>
<div class="t" style="left:516.8px;width:400px;text-align:right;top:518.41px;font-size:17px;color:#111;font-weight:400;">0,000</div>
<div class="t" style="left:600.5px;width:400px;text-align:right;top:518.41px;font-size:17px;color:#111;font-weight:400;">508,000</div>
<div class="t" style="left:683.5px;width:400px;text-align:right;top:518.41px;font-size:17px;color:#111;font-weight:400;">508,000</div>
<div class="t" style="left:1096.4px;top:517.69px;font-size:17.8px;color:#111;font-weight:400;font-style:normal;">szt</div>
<div class="t" style="left:800.5px;width:400px;text-align:right;top:518.41px;font-size:17px;color:#111;font-weight:400;">321,10</div>
<div class="t" style="left:866.5px;width:400px;text-align:right;top:518.41px;font-size:17px;color:#111;font-weight:400;">394,95</div>
<div class="t" style="left:1278.6px;top:517.69px;font-size:17.8px;color:#111;font-weight:400;font-style:normal;transform:scaleX(0.95);transform-origin:0 0;">PLN</div>
<div class="t" style="left:1362px;top:517.69px;font-size:17.8px;color:#111;font-weight:400;font-style:normal;transform:scaleX(1.015);transform-origin:0 0;">Coś dla wymagaj...</div>
<div class="t" style="left:305.4px;top:552.19px;font-size:17.8px;color:#111;font-weight:400;font-style:normal;transform:scaleX(0.98);transform-origin:0 0;">TW</div>
<div class="t" style="left:348.4px;top:552.19px;font-size:17.8px;color:#111;font-weight:400;font-style:normal;transform:scaleX(0.92);transform-origin:0 0;">ZELA...</div>
<div class="t" style="left:416.2px;top:552.19px;font-size:17.8px;color:#111;font-weight:400;font-style:normal;transform:scaleX(1.01);transform-origin:0 0;">Żel pod prysznic Algi 200 ml</div>
<div class="t" style="left:318.5px;width:400px;text-align:right;top:552.91px;font-size:17px;color:#111;font-weight:400;">220,...</div>
<div class="t" style="left:516.8px;width:400px;text-align:right;top:552.91px;font-size:17px;color:#111;font-weight:400;">0,000</div>
<div class="t" style="left:600.5px;width:400px;text-align:right;top:552.91px;font-size:17px;color:#111;font-weight:400;">220,000</div>
<div class="t" style="left:683.5px;width:400px;text-align:right;top:552.91px;font-size:17px;color:#111;font-weight:400;">220,000</div>
<div class="t" style="left:1096.4px;top:552.19px;font-size:17.8px;color:#111;font-weight:400;font-style:normal;">szt</div>
<div class="t" style="left:800.5px;width:400px;text-align:right;top:552.91px;font-size:17px;color:#111;font-weight:400;">8,84</div>
<div class="t" style="left:866.5px;width:400px;text-align:right;top:552.91px;font-size:17px;color:#111;font-weight:400;">9,28</div>
<div class="t" style="left:1278.6px;top:552.19px;font-size:17.8px;color:#111;font-weight:400;font-style:normal;transform:scaleX(0.95);transform-origin:0 0;">PLN</div>
<div class="t" style="left:1362px;top:552.19px;font-size:17.8px;color:#111;font-weight:400;font-style:normal;transform:scaleX(1.015);transform-origin:0 0;">Algi morskie żel p...</div>
<div class="t" style="left:305.4px;top:586.69px;font-size:17.8px;color:#111;font-weight:400;font-style:normal;transform:scaleX(0.98);transform-origin:0 0;">TW</div>
<div class="t" style="left:348.4px;top:586.69px;font-size:17.8px;color:#111;font-weight:400;font-style:normal;transform:scaleX(0.92);transform-origin:0 0;">ZELA...</div>
<div class="t" style="left:416.2px;top:586.69px;font-size:17.8px;color:#111;font-weight:400;font-style:normal;transform:scaleX(1.01);transform-origin:0 0;">Żel pod prysznic Aqua 300 ml</div>
<div class="t" style="left:318.5px;width:400px;text-align:right;top:587.41px;font-size:17px;color:#111;font-weight:400;">320,...</div>
<div class="t" style="left:516.8px;width:400px;text-align:right;top:587.41px;font-size:17px;color:#111;font-weight:400;">0,000</div>
<div class="t" style="left:600.5px;width:400px;text-align:right;top:587.41px;font-size:17px;color:#111;font-weight:400;">320,000</div>
<div class="t" style="left:683.5px;width:400px;text-align:right;top:587.41px;font-size:17px;color:#111;font-weight:400;">320,000</div>
<div class="t" style="left:1096.4px;top:586.69px;font-size:17.8px;color:#111;font-weight:400;font-style:normal;">szt</div>
<div class="t" style="left:800.5px;width:400px;text-align:right;top:587.41px;font-size:17px;color:#111;font-weight:400;">46,80</div>
<div class="t" style="left:866.5px;width:400px;text-align:right;top:587.41px;font-size:17px;color:#111;font-weight:400;">49,14</div>
<div class="t" style="left:1278.6px;top:586.69px;font-size:17.8px;color:#111;font-weight:400;font-style:normal;transform:scaleX(0.95);transform-origin:0 0;">PLN</div>
<div class="t" style="left:1362px;top:586.69px;font-size:17.8px;color:#111;font-weight:400;font-style:normal;transform:scaleX(1.015);transform-origin:0 0;">Aqua - Żel pod pr...</div>
<div class="t" style="left:305.4px;top:621.19px;font-size:17.8px;color:#111;font-weight:400;font-style:normal;transform:scaleX(0.98);transform-origin:0 0;">KT</div>
<div class="t" style="left:348.4px;top:621.19px;font-size:17.8px;color:#111;font-weight:400;font-style:normal;transform:scaleX(0.92);transform-origin:0 0;">ZES...</div>
<div class="t" style="left:416.2px;top:621.19px;font-size:17.8px;color:#111;font-weight:400;font-style:normal;transform:scaleX(1.01);transform-origin:0 0;">Zestaw ekskluzywny</div>
<div class="t" style="left:318.5px;width:400px;text-align:right;top:621.91px;font-size:17px;color:#111;font-weight:400;">18,000</div>
<div class="t" style="left:516.8px;width:400px;text-align:right;top:621.91px;font-size:17px;color:#111;font-weight:400;">0,000</div>
<div class="t" style="left:600.5px;width:400px;text-align:right;top:621.91px;font-size:17px;color:#111;font-weight:400;">18,000</div>
<div class="t" style="left:683.5px;width:400px;text-align:right;top:621.91px;font-size:17px;color:#111;font-weight:400;">18,000</div>
<div class="t" style="left:1096.4px;top:621.19px;font-size:17.8px;color:#111;font-weight:400;font-style:normal;">szt</div>
<div class="t" style="left:800.5px;width:400px;text-align:right;top:621.91px;font-size:17px;color:#111;font-weight:400;">0,00</div>
<div class="t" style="left:866.5px;width:400px;text-align:right;top:621.91px;font-size:17px;color:#111;font-weight:400;">0,00</div>
<div class="t" style="left:1278.6px;top:621.19px;font-size:17.8px;color:#111;font-weight:400;font-style:normal;transform:scaleX(0.95);transform-origin:0 0;">PLN</div>
<div class="t" style="left:1362px;top:621.19px;font-size:17.8px;color:#111;font-weight:400;font-style:normal;transform:scaleX(1.015);transform-origin:0 0;">Perfumy plus po...</div>
<div style="position:absolute;left:293px;top:333px;width:1365px;height:330px;border-radius:7px 7px 0 0;box-shadow:inset 0 8px 10px -6px rgba(90,30,30,0.22), inset 8px 0 10px -8px rgba(90,30,30,0.15), inset -8px 0 10px -8px rgba(90,30,30,0.15);-webkit-mask-image:linear-gradient(#000 0%,#000 40%,transparent 100%)"></div>
<div style="position:absolute;left:283px;top:323px;width:1385px;height:350px;-webkit-mask-image:linear-gradient(#000 0%,#000 45%,transparent 97%)"><div style="position:absolute;left:10px;top:10px;width:1365px;height:330px;box-sizing:border-box;border:2px solid #ff0d0d;border-bottom:none;border-radius:7px 7px 0 0;box-shadow:2px 2px 6px rgba(0,0,0,0.22)"></div></div>
<svg style="position:absolute;left:960px;top:326px;" width="34" height="10" viewBox="0 0 34 10"><path d="M6 8.4 C12 8.4 15.4 7 16.6 2.2 C17.8 7 21.2 8.4 27.2 8.4 Z" fill="#ff0d0d"/></svg>
<div style="position:absolute;left:956.1px;top:288.0px;width:41.0px;height:41.0px;box-sizing:border-box;border-radius:50%;border:2.6px solid #ff1414;background:radial-gradient(circle at 50% 40%,rgba(226,54,54,0.93),rgba(212,40,40,0.93));box-shadow:1px 2px 5px rgba(0,0,0,0.35)"></div>
<div class="t" style="left:956.6px;width:40px;text-align:center;top:296.4px;font-size:23px;line-height:26px;color:#fbeaea;-webkit-text-stroke:0.6px #fbeaea">2</div>
<div style="position:absolute;left:27px;top:382px;width:108px;height:27px;background:linear-gradient(90deg,rgba(215,180,180,0.12),rgba(200,160,160,0.28));box-shadow:0 2px 4px rgba(0,0,0,0.10)"></div>
<div style="position:absolute;left:27px;top:381.5px;width:104px;height:2.4px;background:linear-gradient(90deg,rgba(255,20,20,0.35),#ff1414 40%)"></div>
<div style="position:absolute;left:27px;top:407.5px;width:104px;height:2.4px;background:linear-gradient(90deg,rgba(255,20,20,0.35),#ff1414 40%)"></div>
<svg style="position:absolute;left:128px;top:380px;" width="16" height="32" viewBox="0 0 16 32"><path d="M2 2.7 C5.2 2.7 7.4 3.6 7.4 7.6 V11.2 C7.4 13.4 8.6 14.7 11.6 14.7 C8.6 14.7 7.4 16 7.4 18.2 V23.8 C7.4 27.8 5.2 28.7 2 28.7" fill="none" stroke="#ff1414" stroke-width="2.4"/></svg>
<div style="position:absolute;left:139.5px;top:374.0px;width:41.0px;height:41.0px;box-sizing:border-box;border-radius:50%;border:2.6px solid #ff1414;background:radial-gradient(circle at 50% 40%,rgba(226,54,54,0.93),rgba(212,40,40,0.93));box-shadow:1px 2px 5px rgba(0,0,0,0.35)"></div>
<div class="t" style="left:140px;width:40px;text-align:center;top:382.4px;font-size:23px;line-height:26px;color:#fbeaea;-webkit-text-stroke:0.6px #fbeaea"></div>
<svg style="position:absolute;left:150px;top:380px;" width="20" height="28" viewBox="0 0 20 28"><path d="M5.4 10.6 L11 6.6 V22.9" fill="none" stroke="#fbeaea" stroke-width="2.7" stroke-linejoin="round"/></svg>
<svg style="position:absolute;left:430px;top:98px;" width="86" height="68" viewBox="0 0 86 68"><defs><filter id="sh" x="-20%" y="-20%" width="140%" height="140%"><feGaussianBlur in="SourceAlpha" stdDeviation="2"/><feOffset dx="1" dy="3"/><feComponentTransfer><feFuncA type="linear" slope="0.35"/></feComponentTransfer><feMerge><feMergeNode/><feMergeNode in="SourceGraphic"/></feMerge></filter></defs><path d="M8.8 61.4 L53 22.2 L48.5 14.2 L76.3 6.6 L63.7 32.3 L58.6 26.6 Z" fill="#ff0000" filter="url(#sh)"/></svg>
<div style="position:absolute;left:418.0px;top:106.3px;width:41.0px;height:41.0px;box-sizing:border-box;border-radius:50%;border:2.6px solid #ff1414;background:radial-gradient(circle at 50% 40%,rgba(226,54,54,0.93),rgba(212,40,40,0.93));box-shadow:1px 2px 5px rgba(0,0,0,0.35)"></div>
<div class="t" style="left:418.5px;width:40px;text-align:center;top:114.7px;font-size:23px;line-height:26px;color:#fbeaea;-webkit-text-stroke:0.6px #fbeaea">3</div>
</body></html>
